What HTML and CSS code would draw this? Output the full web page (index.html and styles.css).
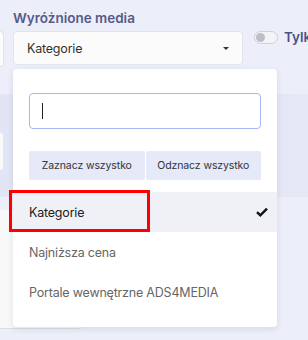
FILE: index.html
```html
<!DOCTYPE html>
<html lang="pl">
<head>
    <meta charset="UTF-8">
    <meta name="viewport" content="width=device-width, initial-scale=1.0">
    <title>Wyróżnione media</title>
    <link rel="stylesheet" href="styles.css">
</head>
<body>
    <div class="filters">
        <div class="field field-prev">
            <div class="select"></div>
        </div>
        <div class="field">
            <label class="label">Wyróżnione media</label>
            <div class="select select-main">
                <span>Kategorie</span>
                <span class="caret"></span>
            </div>
        </div>
        <div class="switch-field">
            <span class="switch"><span class="knob"></span></span>
            <span class="switch-label">Tylko</span>
        </div>
    </div>

    <div class="band">
        <div class="band-input"></div>
    </div>

    <div class="lower">
        <div class="lower-card"></div>
    </div>

    <div class="dropdown">
        <div class="search">
            <span class="cursor"></span>
        </div>
        <div class="actions">
            <button type="button">Zaznacz wszystko</button>
            <button type="button">Odznacz wszystko</button>
        </div>
        <ul class="options">
            <li class="selected">
                <span>Kategorie</span>
                <svg width="12" height="10" viewBox="0 0 12 10"><path d="M1 5.2 L4.3 8.3 L11 1.6" fill="none" stroke="#111" stroke-width="2.4"/></svg>
            </li>
            <li>Najniższa cena</li>
            <li>Portale wewnętrzne ADS4MEDIA</li>
        </ul>
    </div>

    <div class="highlight"></div>
</body>
</html>
```

FILE: styles.css
```css
body {
    margin: 0;
    background: #eceef9;
    font-family: 'Inter', sans-serif;
    color: #333;
    position: relative;
    height: 340px;
    overflow: hidden;
}
.filters {
    display: flex;
    align-items: flex-start;
    padding-top: 8px;
    height: 86px;
}
.field {
    display: flex;
    flex-direction: column;
}
.field-prev {
    width: 3px;
    margin-right: 10px;
    padding-top: 23px;
}
.field-prev .select {
    width: 3px;
    border-left: none;
    border-radius: 0 4px 4px 0;
}
.label {
    font-size: 13.5px;
    font-weight: 600;
    color: #565b87;
    line-height: 20px;
    margin-bottom: 3px;
}
.select {
    height: 34px;
    background: #fbfbfc;
    border: 1px solid #e3e4ea;
    border-radius: 4px;
}
.select-main {
    width: 230px;
    display: flex;
    align-items: center;
    justify-content: space-between;
    padding: 0 13px;
    box-sizing: border-box;
    font-size: 12.5px;
    letter-spacing: -0.2px;
    color: #333;
}
.caret {
    width: 0;
    height: 0;
    border-left: 3px solid transparent;
    border-right: 3px solid transparent;
    border-top: 3px solid #333;
}
.switch-field {
    display: flex;
    align-items: center;
    gap: 6px;
    margin-left: 11px;
    margin-top: 21px;
}
.switch {
    width: 20px;
    height: 11px;
    border: 1px solid #cfd0d8;
    border-radius: 7px;
    background: #f4f4f7;
    display: flex;
    align-items: center;
    padding: 0 1px;
}
.knob {
    width: 9px;
    height: 9px;
    border-radius: 50%;
    background: #bdbec6;
}
.switch-label {
    font-size: 13.5px;
    font-weight: 600;
    color: #4b5184;
}
.band {
    height: 103px;
    background: linear-gradient(90deg, #e2e5f4, #dfe2f2 60%, #e6e8f6);
    padding-top: 39px;
    box-sizing: border-box;
}
.band-input {
    width: 3px;
    height: 37px;
    background: #fafafd;
    border-radius: 0 4px 4px 0;
}
.lower {
    padding-top: 13px;
}
.lower-card {
    width: 82px;
    height: 118px;
    background: #f8f8f9;
    border-bottom: 1px solid #dcdde6;
    border-radius: 0 0 4px 0;
}
.dropdown {
    position: absolute;
    left: 13px;
    top: 69px;
    width: 264px;
    height: 258px;
    background: #fff;
    border-radius: 4px;
    box-shadow: 0 2px 6px rgba(60, 64, 110, 0.12);
    padding-top: 24px;
    box-sizing: border-box;
}
.search {
    margin: 0 16px;
    height: 36px;
    border: 1px solid #a9b6f5;
    border-radius: 4px;
    box-sizing: border-box;
    padding: 9px 0 0 12px;
}
.cursor {
    display: block;
    width: 1px;
    height: 16px;
    background: #222;
}
.actions {
    display: flex;
    gap: 1px;
    margin: 22px 16px 0;
}
.actions button {
    flex: 1;
    height: 29px;
    border: none;
    border-radius: 2px;
    background: #e6e9f8;
    font-family: 'Inter', sans-serif;
    font-size: 10.5px;
    letter-spacing: -0.1px;
    color: #333;
    padding: 0;
}
.options {
    list-style: none;
    margin: 12px 0 0;
    padding: 0;
}
.options li {
    height: 40px;
    display: flex;
    align-items: center;
    justify-content: space-between;
    padding: 0 9px 0 16px;
    font-size: 12.5px;
    letter-spacing: -0.2px;
    color: #666;
}
.options li.selected {
    background: #f0f1f7;
    color: #222;
}
.highlight {
    position: absolute;
    left: 9px;
    top: 190px;
    width: 141px;
    height: 42px;
    border: 3px solid #f00;
    box-sizing: border-box;
}
```
